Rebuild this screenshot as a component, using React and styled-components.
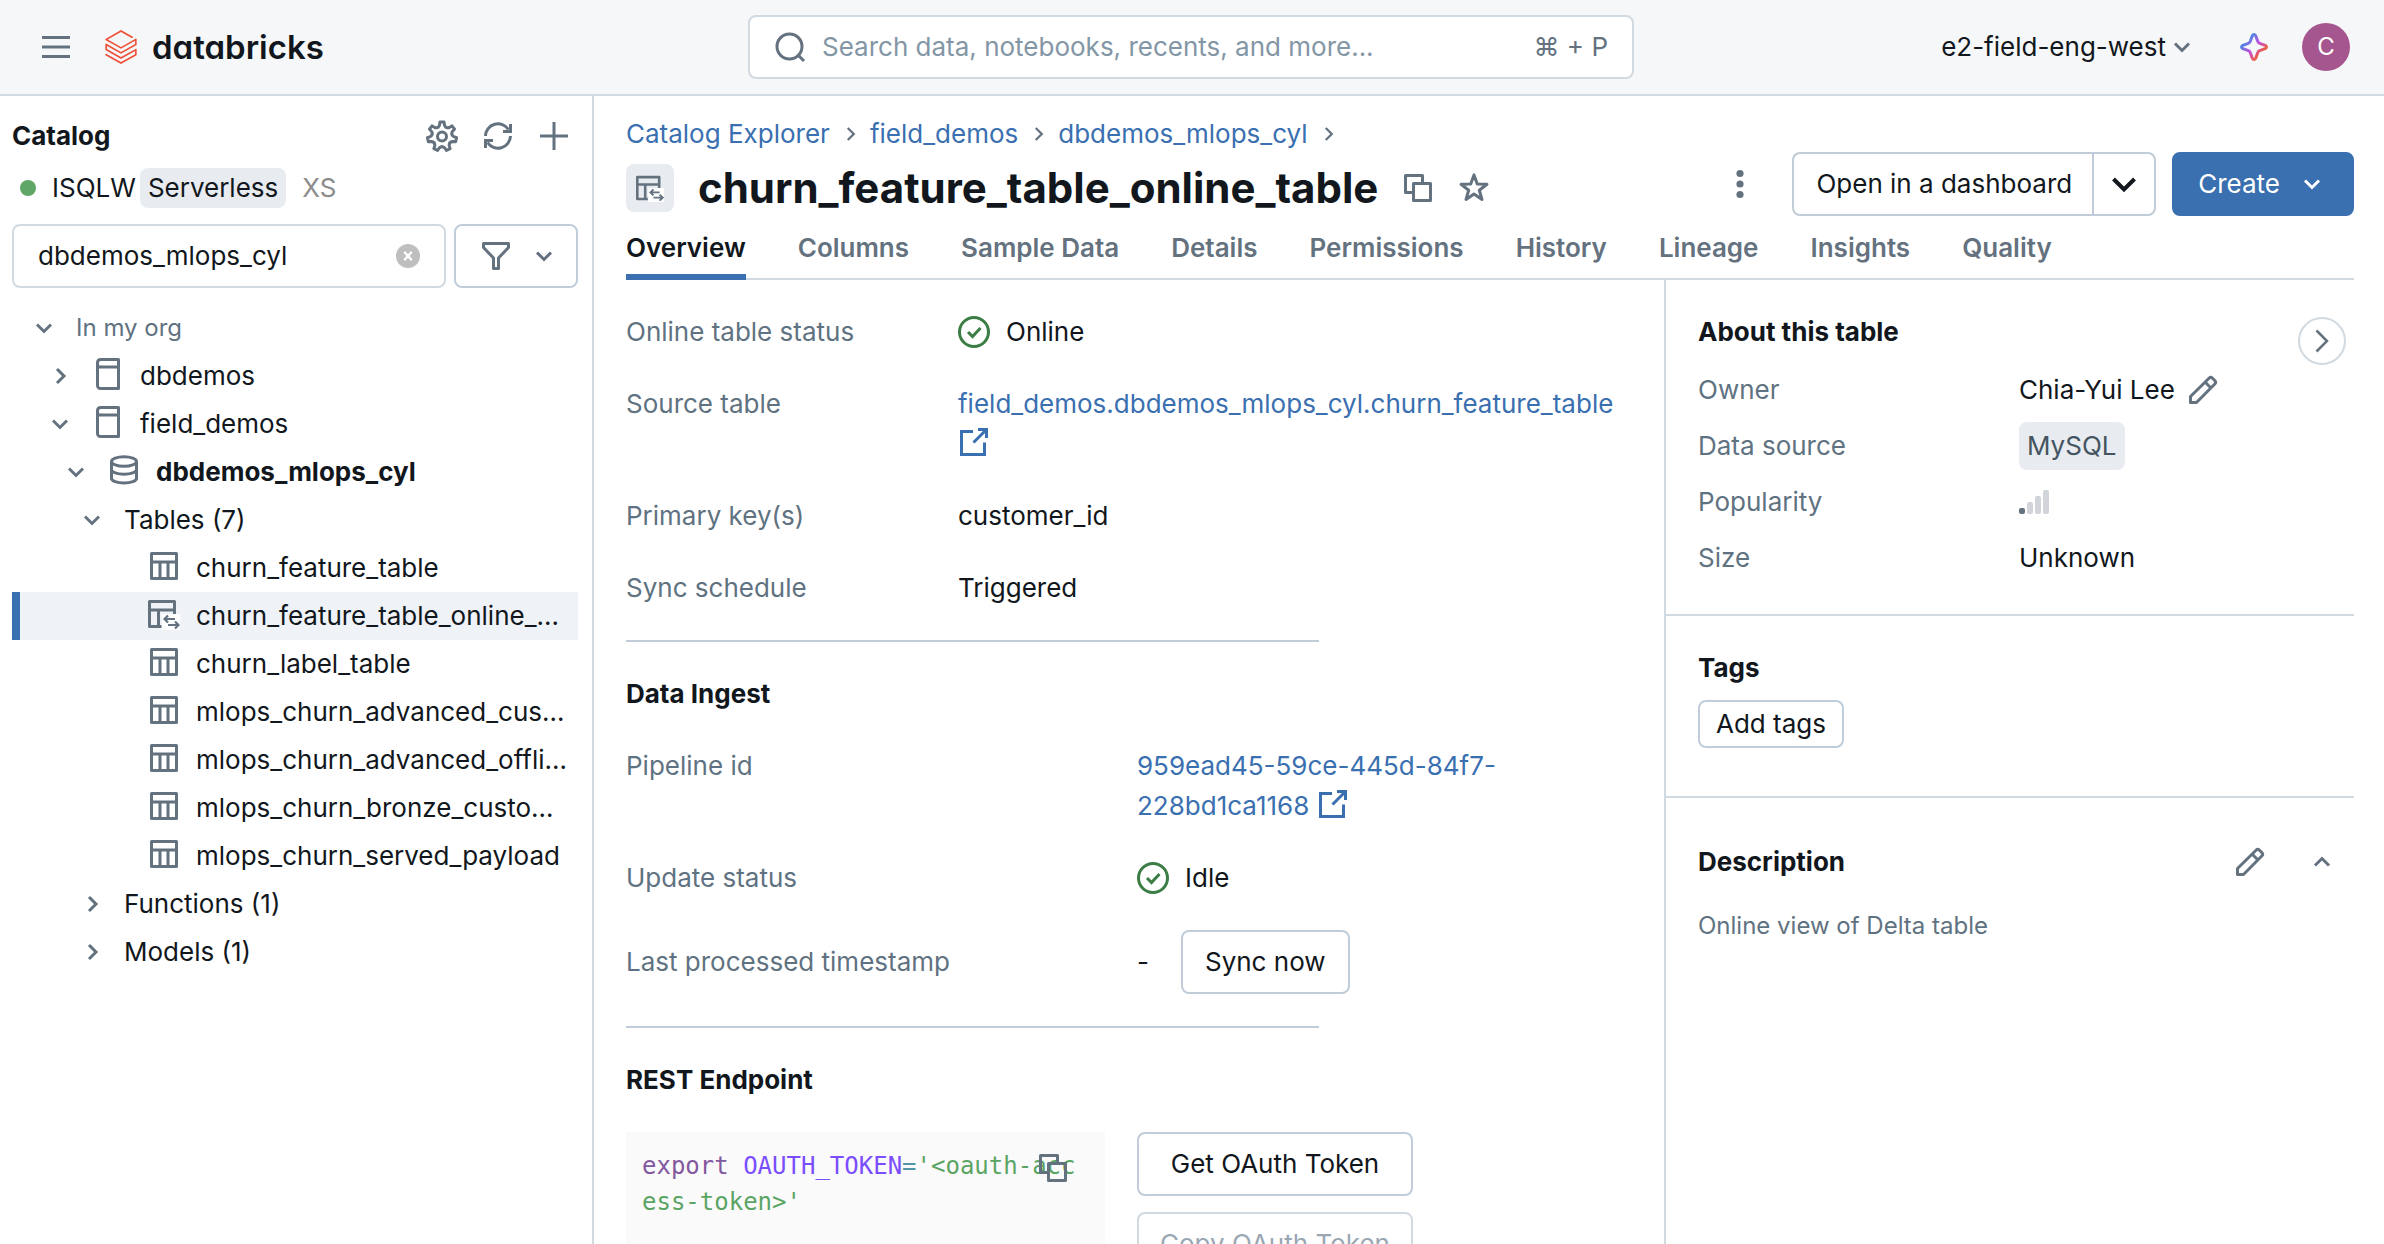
import React from "react";
import styled, { createGlobalStyle } from "styled-components";

const color = {
  text: "#11171c",
  muted: "#5f7281",
  icon: "#647280",
  placeholder: "#8396a5",
  link: "#3a6fb0",
  border: "#d1d9e1",
  control: "#c0cdd8",
  tag: "#e8ecf0",
  green: "#3b7d45",
};

const GlobalStyle = createGlobalStyle`
  *, *::before, *::after { box-sizing: border-box; }
  body {
    margin: 0;
    background: #fff;
    color: ${color.text};
    font-family: Inter, "Liberation Sans", sans-serif;
    font-size: 26px;
    line-height: 40px;
  }
  button, input { font: inherit; color: inherit; }
  h1, h2, ul, dl, dd, dt, p, pre { margin: 0; padding: 0; font: inherit; }
  ul { list-style: none; }
`;

/* ---------- icons ---------- */

const Glyph = styled.svg`
  display: block;
  flex: none;
  width: ${(p) => p.$size || 32}px;
  height: ${(p) => p.$size || 32}px;
  fill: none;
  stroke: currentColor;
  stroke-width: 3;
`;

const Icon = ({ size, children }) => (
  <Glyph viewBox="0 0 32 32" $size={size} aria-hidden="true">
    {children}
  </Glyph>
);

const polar = (cx, cy, r, a) =>
  `${(cx + r * Math.sin(a)).toFixed(2)} ${(cy - r * Math.cos(a)).toFixed(2)}`;

const gearPath = (() => {
  const step = (Math.PI * 2) / 7;
  let d = "";
  for (let i = 0; i < 7; i += 1) {
    const a = i * step;
    d += `${i ? "L" : "M"}${polar(16, 16.5, 14.6, a - 0.14)}`;
    d += `L${polar(16, 16.5, 14.6, a + 0.14)}L${polar(16, 16.5, 11.6, a + 0.22)}`;
    d += `Q${polar(16, 16.5, 8.8, a + step / 2)} ${polar(16, 16.5, 11.6, a + step - 0.22)}`;
  }
  return `${d}Z`;
})();

const starPath = `M${Array.from({ length: 10 }, (_, i) =>
  polar(16, 16.5, i % 2 ? 5.6 : 13.6, (i * Math.PI) / 5)
).join("L")}Z`;

const MenuIcon = () => (
  <Icon>
    <path d="M2 6.5h28M2 16h28M2 25.5h28" />
  </Icon>
);
const SearchIcon = () => (
  <Icon>
    <circle cx="15.5" cy="15.5" r="12.5" />
    <path d="M24 24l6 6" />
  </Icon>
);
const ChevronDown = () => (
  <Icon>
    <path d="M9 12.5l7 7 7-7" />
  </Icon>
);
const ChevronUp = () => (
  <Icon>
    <path d="M9 19.5l7-7 7 7" />
  </Icon>
);
const ChevronRight = () => (
  <Icon>
    <path d="M13 9l7 7-7 7" />
  </Icon>
);
const BoldChevron = () => (
  <Icon>
    <path d="M5.5 11L16 21.5 26.5 11" strokeWidth="4" />
  </Icon>
);
const SmallChevron = () => (
  <Icon size={24}>
    <path d="M13 8l8 8-8 8" />
  </Icon>
);
const GearIcon = () => (
  <Icon>
    <path d={gearPath} strokeLinejoin="round" />
    <circle cx="16" cy="16.5" r="4.5" />
  </Icon>
);
const RefreshIcon = () => (
  <Icon>
    <path d="M3.5 16A12.5 12.5 0 0 1 26.5 9.5M28.5 16A12.5 12.5 0 0 1 5.5 22.5" />
    <path d="M28.5 4v7.5H21M3.5 28v-7.5H11" />
  </Icon>
);
const PlusIcon = () => (
  <Icon>
    <path d="M16 2v28M2 16h28" />
  </Icon>
);
const FilterIcon = () => (
  <Icon>
    <path d="M3.5 3.5h25v4L18.5 18v10.5h-5V18L3.5 7.5z" strokeLinejoin="round" />
  </Icon>
);
const CatalogIcon = () => (
  <Icon>
    <path
      d="M26.5 1.5v29H8.5a3 3 0 0 1-3-3v-23a3 3 0 0 1 3-3zM26.5 9H8a2.5 2.5 0 0 1-2.5-2.5"
      strokeLinejoin="round"
    />
  </Icon>
);
const SchemaIcon = () => (
  <Icon>
    <ellipse cx="16" cy="7.5" rx="12.5" ry="4.8" />
    <path d="M3.5 7.5v17c0 2.5 5.5 4.5 12.5 4.5s12.5-2 12.5-4.5v-17M3.5 15.5c0 2.7 5.5 4.8 12.5 4.8s12.5-2.1 12.5-4.8" />
  </Icon>
);
const TableIcon = () => (
  <Icon>
    <path d="M3.5 3.5h25v25h-25zM3.5 12h25M12 12v16.5M20 12v16.5" strokeLinejoin="round" />
  </Icon>
);
const OnlineTableIcon = ({ size }) => (
  <Icon size={size}>
    <path d="M26.5 17V3.5h-25v25h12M1.5 12h25M10.5 12v16.5" strokeLinejoin="round" />
    <path d="M14 16h18v16H14z" fill="#fff" stroke="none" />
    <path
      d="M27 21H17M20 17.5L16.5 21l3.5 3.5M20 27h10M27 23.5l3.5 3.5-3.5 3.5"
      strokeWidth="2.2"
    />
  </Icon>
);
const CopyIcon = () => (
  <Icon>
    <path d="M11 20.5H3.5v-17h17V11" strokeLinejoin="round" />
    <path d="M11.5 11.5h17v17h-17z" strokeLinejoin="round" />
  </Icon>
);
const StarIcon = () => (
  <Icon>
    <path d={starPath} strokeLinejoin="round" />
  </Icon>
);
const KebabIcon = () => (
  <Icon>
    <g fill="currentColor" stroke="none">
      <circle cx="16" cy="5.5" r="3.6" />
      <circle cx="16" cy="16" r="3.6" />
      <circle cx="16" cy="26.5" r="3.6" />
    </g>
  </Icon>
);
const CheckIcon = () => (
  <Icon>
    <circle cx="16" cy="16" r="14.5" />
    <path d="M10 16l4.5 4.5 8-8.5" />
  </Icon>
);
const ExternalIcon = () => (
  <Icon>
    <path d="M15 5.5H3.5v23h23v-12M20 3.5h8.5V12M28 4L15.5 16.5" />
  </Icon>
);
const PencilIcon = () => (
  <Icon>
    <path
      d="M3.5 28.5v-6L22 4.2a2.5 2.5 0 0 1 3.5 0l2.3 2.3a2.5 2.5 0 0 1 0 3.5L9.5 28.5zM18 8l6 6"
      strokeLinejoin="round"
    />
  </Icon>
);
const CollapseIcon = () => (
  <Icon>
    <path d="M10.5 5.5L21 16 10.5 26.5" strokeWidth="2.5" />
  </Icon>
);
const ClearIcon = () => (
  <Icon size={24}>
    <circle cx="16" cy="16" r="16" fill="#bfbfbf" stroke="none" />
    <path d="M11 10.5l10 11M21 10.5l-10 11" stroke="#fff" />
  </Icon>
);
const PopularityIcon = () => (
  <Icon>
    <g stroke="none" fill="#d1d5db">
      <rect x="0" y="22" width="6" height="6" rx="2" fill={color.icon} />
      <rect x="8" y="16" width="6" height="12" rx="2" />
      <rect x="16" y="10" width="6" height="18" rx="2" />
      <rect x="24" y="4" width="6" height="24" rx="2" />
    </g>
  </Icon>
);
const SparkleIcon = () => (
  <Icon>
    <defs>
      <linearGradient id="spark" x1="4" y1="4" x2="28" y2="28" gradientUnits="userSpaceOnUse">
        <stop offset="0.2" stopColor="#4a86e0" />
        <stop offset="0.5" stopColor="#c04fe0" />
        <stop offset="0.8" stopColor="#f0603c" />
      </linearGradient>
    </defs>
    <path
      d="M14.3 4.8q1.7-2.6 3.4 0l2 5.500q.6 1.500 2 2l5.500 2q2.600 1.700 0 3.400l-5.500 2q-1.400.5-2 2l-2 5.500q-1.700 2.600-3.400 0l-2-5.500q-.6-1.500-2-2l-5.500-2q-2.600-1.700 0-3.400l5.500-2q1.400-.5 2-2z"
      stroke="url(#spark)"
      strokeLinejoin="round"
    />
  </Icon>
);

const BrandMark = styled.svg`
  display: block;
  width: 34px;
  height: 34px;
  fill: #ee5038;
`;

/* ---------- top bar ---------- */

const Page = styled.div`
  display: flex;
  flex-direction: column;
  height: 100vh;
  overflow: hidden;
`;

const TopBar = styled.header`
  flex: none;
  display: grid;
  grid-template-columns: 1fr minmax(0, 886px) 1fr;
  align-items: center;
  height: 96px;
  padding: 0 34px 0 32px;
  background: #f6f7f9;
  border-bottom: 2px solid ${color.border};
`;

const Cluster = styled.div`
  display: flex;
  align-items: center;
  gap: ${(p) => p.$gap}px;
  justify-content: ${(p) => (p.$end ? "flex-end" : "flex-start")};
`;

const IconButton = styled.button`
  display: block;
  flex: none;
  padding: 0;
  border: 0;
  background: none;
  color: ${color.icon};
`;

const MenuButton = styled(IconButton)`
  padding: 8px;
`;

const Brand = styled.a`
  display: flex;
  align-items: center;
  gap: 14px;
  color: ${color.text};
  text-decoration: none;
  font-size: 33px;
  font-weight: 600;
  font-feature-settings: "cv11" 1;
`;

const SearchBox = styled.label`
  display: flex;
  align-items: center;
  gap: 16px;
  min-width: 0;
  height: 64px;
  padding: 0 24px;
  background: #fff;
  border: 2px solid ${color.border};
  border-radius: 8px;
  color: ${color.icon};
`;

const PlainInput = styled.input`
  flex: 1;
  min-width: 0;
  padding: 0;
  border: 0;
  outline: 0;
  background: none;
  color: ${color.text};
  &::placeholder {
    color: ${color.placeholder};
    opacity: 1;
  }
`;

const Shortcut = styled.span`
  font-family: Inter, "DejaVu Sans", sans-serif;
`;

const Workspace = styled.button`
  display: flex;
  align-items: center;
  margin-right: 8px;
  padding: 0;
  border: 0;
  background: none;
  svg {
    color: ${color.icon};
  }
`;

const Avatar = styled.button`
  width: 48px;
  height: 48px;
  padding: 0;
  border: 0;
  border-radius: 50%;
  background: #a6568e;
  color: #fff;
  font-size: 24px;
`;

/* ---------- sidebar ---------- */

const Body = styled.div`
  flex: 1;
  min-height: 0;
  display: flex;
`;

const Sidebar = styled.aside`
  flex: none;
  display: flex;
  flex-direction: column;
  width: 594px;
  padding: 20px 14px 0 12px;
  border-right: 2px solid ${color.border};
`;

const SplitRow = styled.div`
  display: flex;
  align-items: center;
  justify-content: space-between;
  padding-right: 8px;
`;

const Heading = styled.h2`
  font-weight: 700;
`;

const Warehouse = styled.div`
  display: flex;
  align-items: center;
  margin: 12px 0 16px;
  padding-left: 8px;
`;

const StatusDot = styled.span`
  width: 16px;
  height: 16px;
  margin-right: 16px;
  border-radius: 50%;
  background: #5fa667;
`;

const Tag = styled.span`
  display: inline-block;
  padding: ${(p) => (p.$tall ? 4 : 0)}px 8px;
  border-radius: 8px;
  background: ${color.tag};
  color: ${(p) => (p.$tall ? "#445461" : color.text)};
`;

const WarehouseTag = styled(Tag)`
  margin: 0 16px 0 4px;
`;

const SizeNote = styled.span`
  color: #8c8c8c;
`;

const FilterRow = styled.div`
  display: grid;
  grid-template-columns: minmax(0, 1fr) 124px;
  gap: 8px;
  margin-bottom: 16px;
`;

const FilterButton = styled.button`
  display: flex;
  align-items: center;
  justify-content: flex-end;
  gap: 16px;
  height: 64px;
  padding: 0 16px;
  border: 2px solid ${color.control};
  border-radius: 8px;
  background: #fff;
  color: ${color.icon};
`;

const TreeRow = styled.button`
  display: flex;
  align-items: center;
  gap: 16px;
  width: 100%;
  height: 48px;
  padding: 0 0 0 ${(p) => p.$indent}px;
  border: 0;
  background: ${(p) => (p.$selected ? "#eff2f7" : "none")};
  box-shadow: ${(p) => (p.$selected ? `inset 8px 0 ${color.link}` : "none")};
  color: ${(p) => (p.$root ? color.muted : color.text)};
  font-size: ${(p) => (p.$root ? 24 : 26)}px;
  font-weight: ${(p) => (p.$strong ? 700 : 400)};
  text-align: left;
  white-space: nowrap;
  svg {
    color: ${color.icon};
  }
`;

const TreeIcon = styled.span`
  padding-bottom: 4px;
`;

/* ---------- main ---------- */

const Main = styled.main`
  flex: 1;
  min-width: 0;
  display: flex;
  flex-direction: column;
  padding: 18px 30px 0 32px;
`;

const MainHead = styled.div`
  display: flex;
  justify-content: space-between;
  align-items: flex-end;
`;

const Breadcrumb = styled.nav`
  display: flex;
  align-items: center;
  gap: 8px;
  margin-bottom: 6px;
  color: ${color.icon};
`;

const Link = styled.a`
  color: ${color.link};
  text-decoration: none;
`;

const TitleRow = styled.div`
  display: flex;
  align-items: center;
  gap: 24px;
`;

const TitleBadge = styled.span`
  display: grid;
  place-items: center;
  width: 48px;
  height: 48px;
  border-radius: 8px;
  background: ${color.tag};
  color: ${color.icon};
`;

const Title = styled.h1`
  font-size: 42px;
  font-weight: 700;
  line-height: 56px;
`;

const Button = styled.button`
  display: inline-flex;
  align-items: center;
  justify-content: center;
  gap: 16px;
  height: ${(p) => (p.$small ? 48 : 64)}px;
  padding: 0 ${(p) => (p.$small ? 16 : 22)}px;
  border: 2px solid ${color.control};
  border-radius: 8px;
  background: #fff;
  color: ${color.text};
  white-space: nowrap;
  &:disabled {
    border-color: ${color.border};
    color: #9aa7b3;
  }
`;

const PrimaryButton = styled(Button)`
  padding: 0 24px;
  border-color: ${color.link};
  background: ${color.link};
  color: #fff;
`;

const SplitButton = styled.div`
  display: flex;
  ${Button}:first-child {
    padding: 0 20px 0 22px;
    border-right: 0;
    border-radius: 8px 0 0 8px;
  }
  ${Button}:last-child {
    padding: 0 14px;
    border-radius: 0 8px 8px 0;
  }
`;

const MoreButton = styled(IconButton)`
  margin-right: 20px;
`;

const Tabs = styled.nav`
  display: flex;
  gap: 52px;
  margin-top: 12px;
  border-bottom: 2px solid ${color.border};
`;

const Tab = styled.button`
  height: 52px;
  margin-bottom: -2px;
  padding: 0 0 6px;
  border: 0;
  border-bottom: 6px solid ${(p) => (p.$active ? color.link : "transparent")};
  background: none;
  color: ${(p) => (p.$active ? color.text : color.icon)};
  font-weight: 600;
`;

const Content = styled.div`
  flex: 1;
  min-height: 0;
  display: flex;
`;

const Overview = styled.div`
  flex: 1;
  min-width: 0;
  display: flex;
  flex-direction: column;
  gap: 32px;
  padding: 32px 48px 0 0;
  > * {
    flex-shrink: 0;
  }
`;

const Facts = styled.dl`
  display: grid;
  grid-template-columns: ${(p) => p.$columns};
  row-gap: 32px;
  align-items: start;
  dt {
    color: ${color.muted};
  }
`;

const Status = styled.dd`
  display: flex;
  align-items: center;
  gap: 16px;
  svg {
    color: ${color.green};
  }
`;

const IconLink = styled(Link)`
  svg {
    display: inline-block;
    vertical-align: -5px;
  }
`;

const CenteredTerm = styled.dt`
  align-self: center;
`;

const SyncCell = styled.dd`
  display: flex;
  align-items: center;
  gap: 32px;
`;

const Rule = styled.hr`
  width: 70%;
  height: 2px;
  margin: 0;
  border: 0;
  background: ${color.control};
`;

const Endpoint = styled.div`
  display: grid;
  grid-template-columns: 1fr 1fr;
  column-gap: 32px;
`;

const CodeBlock = styled.div`
  position: relative;
  min-height: 240px;
  padding: 16px;
  background: #fafafa;
`;

const Code = styled.pre`
  color: #5aa464;
  font-family: "DejaVu Sans Mono", monospace;
  font-size: 24px;
  line-height: 36px;
  white-space: pre-wrap;
  word-break: break-all;
`;

const Keyword = styled.span`
  color: #82589f;
`;
const Variable = styled.span`
  color: #7a4dfe;
`;
const Operator = styled.span`
  color: #4f97a5;
`;

const CopyOverlay = styled(IconButton)`
  position: absolute;
  top: 20px;
  right: 36px;
`;

const ButtonStack = styled.div`
  display: flex;
  flex-direction: column;
  gap: 16px;
  width: 276px;
`;

/* ---------- details panel ---------- */

const Panel = styled.aside`
  flex: none;
  width: 690px;
  border-left: 2px solid ${color.border};
`;

const PanelSection = styled.section`
  padding: ${(p) => p.$pad};
  border-bottom: ${(p) => (p.$last ? 0 : 2)}px solid ${color.border};
`;

const PanelHead = styled.div`
  display: flex;
  justify-content: space-between;
  align-items: flex-start;
  height: 50px;
`;

const CollapseButton = styled(IconButton)`
  display: grid;
  place-items: center;
  width: 48px;
  height: 48px;
  margin-top: 5px;
  border: 2px solid ${color.border};
  border-radius: 50%;
`;

const PanelFacts = styled.dl`
  display: grid;
  grid-template-columns: 321px 1fr;
  grid-auto-rows: 56px;
  align-items: center;
  dt {
    color: ${color.muted};
  }
`;

const TagAction = styled.div`
  display: flex;
  margin-top: 12px;
`;

const Description = styled.p`
  margin-top: 24px;
  color: ${color.muted};
  font-size: 24px;
`;

const tree = [
  { label: "In my org", indent: 16, open: true, root: true },
  { label: "dbdemos", indent: 32, open: false, Icon: CatalogIcon },
  { label: "field_demos", indent: 32, open: true, Icon: CatalogIcon },
  { label: "dbdemos_mlops_cyl", indent: 48, open: true, Icon: SchemaIcon, strong: true },
  { label: "Tables (7)", indent: 64, open: true },
  { label: "churn_feature_table", indent: 136, Icon: TableIcon },
  { label: "churn_feature_table_online_…", indent: 136, Icon: OnlineTableIcon, selected: true },
  { label: "churn_label_table", indent: 136, Icon: TableIcon },
  { label: "mlops_churn_advanced_cus…", indent: 136, Icon: TableIcon },
  { label: "mlops_churn_advanced_offli…", indent: 136, Icon: TableIcon },
  { label: "mlops_churn_bronze_custo…", indent: 136, Icon: TableIcon },
  { label: "mlops_churn_served_payload", indent: 136, Icon: TableIcon },
  { label: "Functions (1)", indent: 64, open: false },
  { label: "Models (1)", indent: 64, open: false },
];

const tabs = [
  "Overview",
  "Columns",
  "Sample Data",
  "Details",
  "Permissions",
  "History",
  "Lineage",
  "Insights",
  "Quality",
];

const crumbs = ["Catalog Explorer", "field_demos", "dbdemos_mlops_cyl"];

export default function App() {
  return (
    <Page>
      <GlobalStyle />
      <TopBar>
        <Cluster $gap={24}>
          <MenuButton aria-label="Menu">
            <MenuIcon />
          </MenuButton>
          <Brand href="#">
            <BrandMark viewBox="0 0 24 24" aria-hidden="true">
              <path d="M.95 14.184L12 20.403l9.919-5.55v2.21L12 22.662l-10.484-5.96-.565.308v.77L12 24l11.05-6.218v-4.317l-.515-.309L12 19.118l-9.867-5.653v-2.21L12 16.805l11.05-6.218V6.32l-.515-.308L12 11.974 2.647 6.681 12 1.388l7.76 4.368.668-.411v-.566L12 0 .95 6.27v.72L12 13.207l9.919-5.55v2.26L12 15.52 1.516 9.56l-.565.308Z" />
            </BrandMark>
            databricks
          </Brand>
        </Cluster>
        <SearchBox>
          <SearchIcon />
          <PlainInput
            aria-label="Search"
            placeholder="Search data, notebooks, recents, and more..."
          />
          <Shortcut>⌘ + P</Shortcut>
        </SearchBox>
        <Cluster $gap={32} $end>
          <Workspace>
            e2-field-eng-west
            <ChevronDown />
          </Workspace>
          <IconButton aria-label="Assistant">
            <SparkleIcon />
          </IconButton>
          <Avatar>C</Avatar>
        </Cluster>
      </TopBar>

      <Body>
        <Sidebar>
          <SplitRow>
            <Heading>Catalog</Heading>
            <Cluster $gap={24}>
              <IconButton aria-label="Settings">
                <GearIcon />
              </IconButton>
              <IconButton aria-label="Refresh">
                <RefreshIcon />
              </IconButton>
              <IconButton aria-label="Add">
                <PlusIcon />
              </IconButton>
            </Cluster>
          </SplitRow>
          <Warehouse>
            <StatusDot />
            ISQLW
            <WarehouseTag>Serverless</WarehouseTag>
            <SizeNote>XS</SizeNote>
          </Warehouse>
          <FilterRow>
            <SearchBox>
              <PlainInput aria-label="Filter catalog" defaultValue="dbdemos_mlops_cyl" />
              <IconButton aria-label="Clear">
                <ClearIcon />
              </IconButton>
            </SearchBox>
            <FilterButton aria-label="Filter">
              <FilterIcon />
              <ChevronDown />
            </FilterButton>
          </FilterRow>
          <ul>
            {tree.map(({ label, indent, open, root, strong, selected, Icon: RowIcon }) => (
              <li key={label}>
                <TreeRow $indent={indent} $root={root} $strong={strong} $selected={selected}>
                  {open === true && <ChevronDown />}
                  {open === false && <ChevronRight />}
                  {RowIcon && (
                    <TreeIcon>
                      <RowIcon />
                    </TreeIcon>
                  )}
                  {label}
                </TreeRow>
              </li>
            ))}
          </ul>
        </Sidebar>

        <Main>
          <MainHead>
            <div>
              <Breadcrumb aria-label="Breadcrumb">
                {crumbs.map((name) => (
                  <React.Fragment key={name}>
                    <Link href="#">{name}</Link>
                    <SmallChevron />
                  </React.Fragment>
                ))}
              </Breadcrumb>
              <TitleRow>
                <TitleBadge>
                  <OnlineTableIcon size={28} />
                </TitleBadge>
                <Title>churn_feature_table_online_table</Title>
                <IconButton aria-label="Copy name">
                  <CopyIcon />
                </IconButton>
                <IconButton aria-label="Favorite">
                  <StarIcon />
                </IconButton>
              </TitleRow>
            </div>
            <Cluster $gap={16}>
              <MoreButton aria-label="More">
                <KebabIcon />
              </MoreButton>
              <SplitButton>
                <Button>Open in a dashboard</Button>
                <Button aria-label="More open options">
                  <BoldChevron />
                </Button>
              </SplitButton>
              <PrimaryButton>
                Create
                <ChevronDown />
              </PrimaryButton>
            </Cluster>
          </MainHead>

          <Tabs>
            {tabs.map((name) => (
              <Tab key={name} $active={name === "Overview"}>
                {name}
              </Tab>
            ))}
          </Tabs>

          <Content>
            <Overview>
              <Facts $columns="332px 1fr">
                <dt>Online table status</dt>
                <Status>
                  <CheckIcon />
                  Online
                </Status>
                <dt>Source table</dt>
                <dd>
                  <IconLink href="#">
                    field_demos.dbdemos_mlops_cyl.churn_feature_table <ExternalIcon />
                  </IconLink>
                </dd>
                <dt>Primary key(s)</dt>
                <dd>customer_id</dd>
                <dt>Sync schedule</dt>
                <dd>Triggered</dd>
              </Facts>
              <Rule />
              <Heading>Data Ingest</Heading>
              <Facts $columns="calc(50% + 16px) 1fr">
                <dt>Pipeline id</dt>
                <dd>
                  <IconLink href="#">
                    959ead45-59ce-445d-84f7-228bd1ca1168 <ExternalIcon />
                  </IconLink>
                </dd>
                <dt>Update status</dt>
                <Status>
                  <CheckIcon />
                  Idle
                </Status>
                <CenteredTerm>Last processed timestamp</CenteredTerm>
                <SyncCell>
                  -<Button>Sync now</Button>
                </SyncCell>
              </Facts>
              <Rule />
              <Heading>REST Endpoint</Heading>
              <Endpoint>
                <CodeBlock>
                  <Code>
                    <Keyword>export</Keyword> <Variable>OAUTH_TOKEN</Variable>
                    <Operator>=</Operator>
                    {"'<oauth-access-token>'"}
                  </Code>
                  <CopyOverlay aria-label="Copy code">
                    <CopyIcon />
                  </CopyOverlay>
                </CodeBlock>
                <ButtonStack>
                  <Button>Get OAuth Token</Button>
                  <Button disabled>Copy OAuth Token</Button>
                </ButtonStack>
              </Endpoint>
            </Overview>

            <Panel>
              <PanelSection $pad="32px 8px 28px 32px">
                <PanelHead>
                  <Heading>About this table</Heading>
                  <CollapseButton aria-label="Collapse panel">
                    <CollapseIcon />
                  </CollapseButton>
                </PanelHead>
                <PanelFacts>
                  <dt>Owner</dt>
                  <dd>
                    <Cluster $gap={12}>
                      Chia-Yui Lee
                      <IconButton aria-label="Edit owner">
                        <PencilIcon />
                      </IconButton>
                    </Cluster>
                  </dd>
                  <dt>Data source</dt>
                  <dd>
                    <Tag $tall>MySQL</Tag>
                  </dd>
                  <dt>Popularity</dt>
                  <dd>
                    <PopularityIcon />
                  </dd>
                  <dt>Size</dt>
                  <dd>Unknown</dd>
                </PanelFacts>
              </PanelSection>
              <PanelSection $pad="32px 8px 48px 32px">
                <Heading>Tags</Heading>
                <TagAction>
                  <Button $small>Add tags</Button>
                </TagAction>
              </PanelSection>
              <PanelSection $pad="44px 8px 0 32px" $last>
                <SplitRow>
                  <Heading>Description</Heading>
                  <Cluster $gap={40}>
                    <IconButton aria-label="Edit description">
                      <PencilIcon />
                    </IconButton>
                    <IconButton aria-label="Collapse description">
                      <ChevronUp />
                    </IconButton>
                  </Cluster>
                </SplitRow>
                <Description>Online view of Delta table</Description>
              </PanelSection>
            </Panel>
          </Content>
        </Main>
      </Body>
    </Page>
  );
}
